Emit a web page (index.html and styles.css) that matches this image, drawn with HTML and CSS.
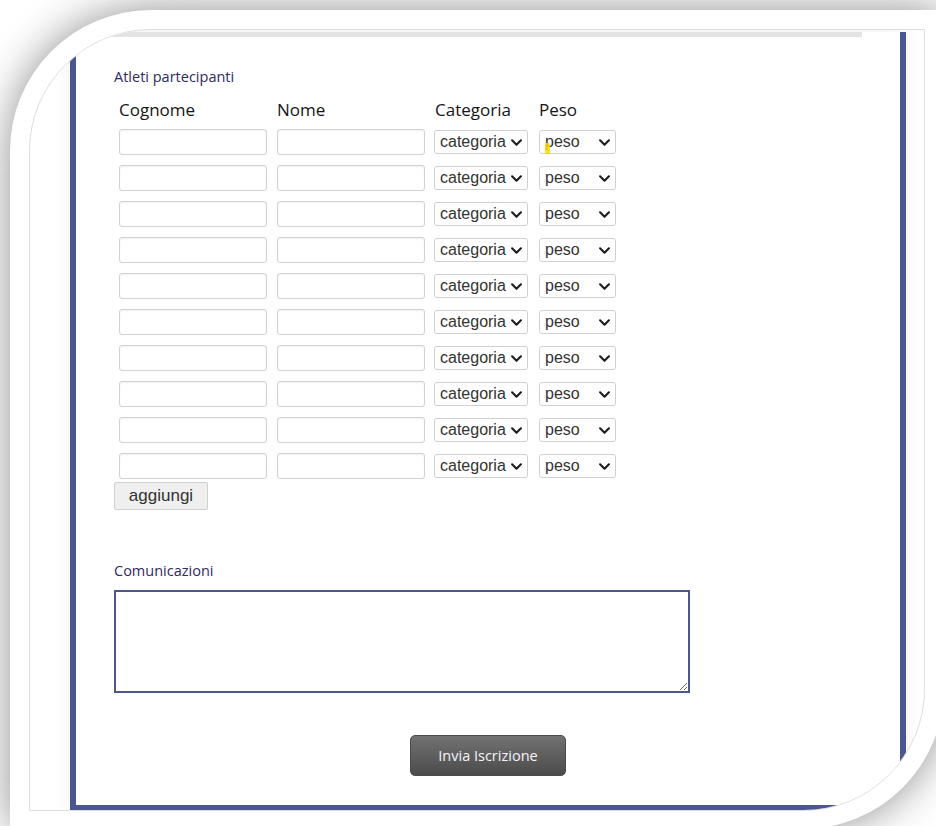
FILE: index.html
```html
<!DOCTYPE html>
<html lang="it">
<head>
<meta charset="utf-8">
<title>Iscrizione atleti</title>
<link rel="stylesheet" href="styles.css">
</head>
<body>
<div class="frame">
  <div class="photo">
    <div class="panel">
      <div class="top-rule"></div>
      <form class="form">
        <div class="section-label first">Atleti partecipanti</div>
        <div class="athletes">
          <div class="th">Cognome</div>
          <div class="th">Nome</div>
          <div class="th">Categoria</div>
          <div class="th">Peso</div>

          <input class="txt" type="text"><input class="txt" type="text">
          <span class="drop cat"><select class="sel"><option>categoria</option></select><svg class="chev" viewBox="0 0 10 6"><path d="M1 1l4 4 4-4"/></svg></span>
          <span class="drop peso"><select class="sel"><option>peso</option></select><svg class="chev" viewBox="0 0 10 6"><path d="M1 1l4 4 4-4"/></svg><span class="pointer-mark"></span></span>

          <input class="txt" type="text"><input class="txt" type="text">
          <span class="drop cat"><select class="sel"><option>categoria</option></select><svg class="chev" viewBox="0 0 10 6"><path d="M1 1l4 4 4-4"/></svg></span>
          <span class="drop peso"><select class="sel"><option>peso</option></select><svg class="chev" viewBox="0 0 10 6"><path d="M1 1l4 4 4-4"/></svg></span>

          <input class="txt" type="text"><input class="txt" type="text">
          <span class="drop cat"><select class="sel"><option>categoria</option></select><svg class="chev" viewBox="0 0 10 6"><path d="M1 1l4 4 4-4"/></svg></span>
          <span class="drop peso"><select class="sel"><option>peso</option></select><svg class="chev" viewBox="0 0 10 6"><path d="M1 1l4 4 4-4"/></svg></span>

          <input class="txt" type="text"><input class="txt" type="text">
          <span class="drop cat"><select class="sel"><option>categoria</option></select><svg class="chev" viewBox="0 0 10 6"><path d="M1 1l4 4 4-4"/></svg></span>
          <span class="drop peso"><select class="sel"><option>peso</option></select><svg class="chev" viewBox="0 0 10 6"><path d="M1 1l4 4 4-4"/></svg></span>

          <input class="txt" type="text"><input class="txt" type="text">
          <span class="drop cat"><select class="sel"><option>categoria</option></select><svg class="chev" viewBox="0 0 10 6"><path d="M1 1l4 4 4-4"/></svg></span>
          <span class="drop peso"><select class="sel"><option>peso</option></select><svg class="chev" viewBox="0 0 10 6"><path d="M1 1l4 4 4-4"/></svg></span>

          <input class="txt" type="text"><input class="txt" type="text">
          <span class="drop cat"><select class="sel"><option>categoria</option></select><svg class="chev" viewBox="0 0 10 6"><path d="M1 1l4 4 4-4"/></svg></span>
          <span class="drop peso"><select class="sel"><option>peso</option></select><svg class="chev" viewBox="0 0 10 6"><path d="M1 1l4 4 4-4"/></svg></span>

          <input class="txt" type="text"><input class="txt" type="text">
          <span class="drop cat"><select class="sel"><option>categoria</option></select><svg class="chev" viewBox="0 0 10 6"><path d="M1 1l4 4 4-4"/></svg></span>
          <span class="drop peso"><select class="sel"><option>peso</option></select><svg class="chev" viewBox="0 0 10 6"><path d="M1 1l4 4 4-4"/></svg></span>

          <input class="txt" type="text"><input class="txt" type="text">
          <span class="drop cat"><select class="sel"><option>categoria</option></select><svg class="chev" viewBox="0 0 10 6"><path d="M1 1l4 4 4-4"/></svg></span>
          <span class="drop peso"><select class="sel"><option>peso</option></select><svg class="chev" viewBox="0 0 10 6"><path d="M1 1l4 4 4-4"/></svg></span>

          <input class="txt" type="text"><input class="txt" type="text">
          <span class="drop cat"><select class="sel"><option>categoria</option></select><svg class="chev" viewBox="0 0 10 6"><path d="M1 1l4 4 4-4"/></svg></span>
          <span class="drop peso"><select class="sel"><option>peso</option></select><svg class="chev" viewBox="0 0 10 6"><path d="M1 1l4 4 4-4"/></svg></span>

          <input class="txt" type="text"><input class="txt" type="text">
          <span class="drop cat"><select class="sel"><option>categoria</option></select><svg class="chev" viewBox="0 0 10 6"><path d="M1 1l4 4 4-4"/></svg></span>
          <span class="drop peso"><select class="sel"><option>peso</option></select><svg class="chev" viewBox="0 0 10 6"><path d="M1 1l4 4 4-4"/></svg></span>
        </div>
        <button class="add-btn" type="button">aggiungi</button>

        <div class="section-label second">Comunicazioni</div>
        <textarea class="notes"></textarea>

        <div class="submit-row">
          <button class="submit-btn" type="submit">Invia Iscrizione</button>
        </div>
      </form>
    </div>
  </div>
</div>
</body>
</html>
```

FILE: styles.css
```css
html, body {
  margin: 0;
  padding: 0;
  overflow: hidden;
  background: #fff;
}

body {
  width: 936px;
  height: 826px;
}

/* white mat with rounded diagonal corners and a soft drop shadow */
.frame {
  box-sizing: border-box;
  margin: 10px 0 0 10px;
  width: 934px;
  height: 819px;
  padding: 19px 0 0 19px;
  background: #fff;
  border-radius: 141px 0 141px 0;
  box-shadow: 0 0 44px rgba(0, 0, 0, 0.44);
}

.photo {
  box-sizing: border-box;
  width: 896px;
  height: 782px;
  border: 1px solid #dedede;
  border-radius: 122px 0 122px 0;
  overflow: hidden;
  background: #fff;
}

/* framed form panel with navy side and bottom borders */
.panel {
  box-sizing: border-box;
  margin-left: 40px;
  width: 836px;
  height: 779px;
  border: 6px solid #4b558e;
  border-top: 0;
  box-shadow: 0 0 18px rgba(0, 0, 0, 0.07);
  background: #fff;
}

.top-rule {
  margin-top: 2px;
  width: 786px;
  height: 5px;
  background: #e3e3e3;
}

.form {
  padding-left: 38px;
}

.section-label {
  font-family: "Open Sans", "Noto Sans", sans-serif;
  font-size: 14.5px;
  line-height: 18px;
  color: #2f2a63;
}

.section-label.first {
  margin-top: 31px;
}

.athletes {
  display: grid;
  grid-template-columns: 148px 148px 94px 77px;
  column-gap: 10px;
  row-gap: 10px;
  align-items: center;
  margin: 14px 0 0 5px;
  width: max-content;
}

.th {
  font-family: "Open Sans", "Noto Sans", sans-serif;
  font-size: 17px;
  line-height: 20px;
  color: #151515;
  margin-bottom: -1px;
}

.txt {
  box-sizing: border-box;
  width: 148px;
  height: 26px;
  margin: 0;
  border: 1px solid #d2d2d2;
  border-radius: 3px;
  background: #fff;
  box-shadow: inset 0 1px 2px rgba(0, 0, 0, 0.06);
}

/* dropdown with a thin chevron drawn over the native control */
.drop {
  position: relative;
  display: block;
  height: 24px;
}

.drop.cat {
  width: 94px;
  margin-left: -1px;
}

.drop.peso {
  width: 77px;
}

.sel {
  appearance: none;
  -webkit-appearance: none;
  box-sizing: border-box;
  display: block;
  width: 100%;
  height: 24px;
  margin: 0;
  padding: 0 0 0 5px;
  border: 1px solid #d0d0d0;
  border-radius: 3px;
  background-color: #fff;
  color: #333;
  font-family: "Liberation Sans", Arial, sans-serif;
  font-size: 16px;
  line-height: 22px;
}

.chev {
  position: absolute;
  right: 6px;
  top: 9px;
  width: 11px;
  height: 7px;
  fill: none;
  stroke: #1e1e1e;
  stroke-width: 1.9;
  stroke-linecap: round;
  stroke-linejoin: round;
  pointer-events: none;
}

/* yellow cursor highlight over the first weight selector */
.pointer-mark {
  position: absolute;
  left: 6px;
  top: 13px;
  width: 5px;
  height: 11px;
  background: rgba(250, 220, 0, 0.85);
  border-radius: 1px;
}

.add-btn {
  display: block;
  box-sizing: border-box;
  margin: 3px 0 0 0;
  width: 94px;
  height: 28px;
  padding: 0;
  border: 1px solid #cfcfcf;
  border-radius: 2px;
  background: #efefef;
  color: #333;
  font-family: "Liberation Sans", Arial, sans-serif;
  font-size: 17px;
}

.section-label.second {
  margin-top: 52px;
}

.notes {
  display: block;
  box-sizing: border-box;
  margin: 10px 0 0 0;
  width: 576px;
  height: 103px;
  border: 2px solid #4b558e;
  border-radius: 0;
  background: #fff;
}

.submit-row {
  display: flex;
  justify-content: center;
  margin: 42px 0 0 -38px;
}

.submit-btn {
  box-sizing: border-box;
  width: 156px;
  height: 41px;
  border: 1px solid #4a4a4a;
  border-radius: 5px;
  background: linear-gradient(#727272, #4b4b4b);
  color: #f4f4fa;
  font-family: "Open Sans", "Noto Sans", sans-serif;
  font-size: 14.5px;
}
```
